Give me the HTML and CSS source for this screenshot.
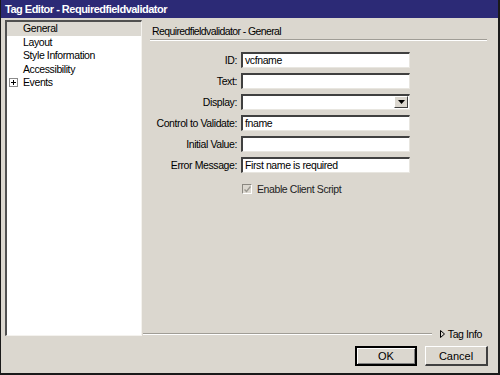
FILE: index.html
```html
<!DOCTYPE html>
<html lang="en">
<head>
    <meta charset="UTF-8">
    <title>Tag Editor - Requiredfieldvalidator</title>
    <link rel="stylesheet" href="styles.css">
</head>
<body>
    <div class="window">
        <div class="titlebar">Tag Editor - Requiredfieldvalidator</div>
        <div class="main">
            <ul class="sidebar">
                <li class="selected">General</li>
                <li>Layout</li>
                <li>Style Information</li>
                <li>Accessibility</li>
                <li><span class="plus"></span>Events</li>
            </ul>
            <div class="panel">
                <div class="panel-header">Requiredfieldvalidator - General</div>
                <div class="form">
                    <label>ID:</label>
                    <div class="field">vcfname</div>
                    <label>Text:</label>
                    <div class="field"></div>
                    <label>Display:</label>
                    <div class="field select"><span class="drop"><svg width="7" height="4" viewBox="0 0 7 4"><path d="M0 0h7L3.5 4z" fill="#000"/></svg></span></div>
                    <label>Control to Validate:</label>
                    <div class="field">fname</div>
                    <label>Initial Value:</label>
                    <div class="field"></div>
                    <label>Error Message:</label>
                    <div class="field">First name is required</div>
                </div>
                <div class="check-row">
                    <span class="checkbox"><svg width="7" height="7" viewBox="0 0 7 7"><path d="M0.5 3.5l2 2 4-5" stroke="#9a9790" stroke-width="1.4" fill="none"/></svg></span>
                    <span>Enable Client Script</span>
                </div>
                <div class="spacer"></div>
                <div class="info-row">
                    <div class="groove"></div>
                    <svg class="tri" width="5" height="8" viewBox="0 0 5 8"><path d="M0.5 0.5L4.5 4L0.5 7.5z" fill="none" stroke="#000" stroke-width="1"/></svg>
                    <span>Tag Info</span>
                </div>
            </div>
        </div>
        <div class="footer">
            <button class="btn default">OK</button>
            <button class="btn">Cancel</button>
        </div>
    </div>
</body>
</html>
```

FILE: styles.css
```css
body {
    margin: 0;
    font-family: "Liberation Sans Narrow", "Liberation Sans", Arial, sans-serif;
    font-size: 10.5px;
    letter-spacing: -0.4px;
    color: #000;
}
.window {
    width: 500px;
    height: 375px;
    box-sizing: border-box;
    background: #dbd7cf;
    border-left: 1px solid #1a1a1a;
    border-right: 2px solid #1a1a1a;
    border-bottom: 2px solid #1a1a1a;
    display: flex;
    flex-direction: column;
}
.titlebar {
    height: 18px;
    line-height: 18px;
    background: #2c2a76;
    color: #fff;
    font-family: "Liberation Sans", Arial, sans-serif;
    font-weight: bold;
    font-size: 11px;
    letter-spacing: -0.5px;
    padding-left: 4px;
}
.main {
    height: 324px;
    display: flex;
}
.sidebar {
    list-style: none;
    margin: 2px 0 6px 4px;
    padding: 0;
    width: 137px;
    box-sizing: border-box;
    background: #fff;
    border-top: 2px solid #505050;
    border-left: 2px solid #505050;
    border-right: 1px solid #f4f2ee;
    border-bottom: 1px solid #f4f2ee;
}
.sidebar li {
    height: 13.5px;
    line-height: 12px;
    padding-left: 16px;
    position: relative;
}
.sidebar li.selected {
    background: #dcd9d2;
}
.plus {
    position: absolute;
    left: 2px;
    top: 2px;
    width: 7px;
    height: 7px;
    border: 1px solid #8a8a8a;
    background:
        linear-gradient(#000, #000) center / 5px 1px no-repeat,
        linear-gradient(#000, #000) center / 1px 5px no-repeat,
        #fff;
}
.panel {
    flex: 1;
    margin-left: 1px;
    display: flex;
    flex-direction: column;
}
.panel-header {
    margin: 0 11px 0 7px;
    padding: 7px 0 1px 2px;
    line-height: 13px;
    letter-spacing: -0.6px;
    border-bottom: 1px solid #a09d96;
    box-shadow: 0 1px 0 #fff;
}
.form {
    margin-top: 12px;
    display: grid;
    grid-template-columns: 94px 169px;
    column-gap: 4px;
    row-gap: 5px;
    grid-auto-rows: 16px;
}
.form label {
    text-align: right;
    line-height: 16px;
}
.field {
    box-sizing: border-box;
    background: #fff;
    border-top: 2px solid #404040;
    border-left: 2px solid #404040;
    border-right: 1px solid #e8e6e0;
    border-bottom: 1px solid #e8e6e0;
    padding-left: 2px;
    line-height: 13px;
    position: relative;
}
.select .drop {
    position: absolute;
    right: 1px;
    top: 0;
    width: 14px;
    height: 12px;
    box-sizing: border-box;
    background: #dbd7cf;
    border-top: 1px solid #fff;
    border-left: 1px solid #fff;
    border-right: 1px solid #404040;
    border-bottom: 1px solid #404040;
    display: flex;
    align-items: center;
    justify-content: center;
}
.check-row {
    margin-top: 10px;
    padding-left: 99px;
    display: flex;
    align-items: center;
    gap: 5px;
    color: #222;
}
.checkbox {
    width: 10px;
    height: 10px;
    box-sizing: border-box;
    border-top: 1px solid #8a8780;
    border-left: 1px solid #8a8780;
    border-right: 1px solid #fff;
    border-bottom: 1px solid #fff;
    background: #dbd7cf;
    display: flex;
    align-items: center;
    justify-content: center;
}
.spacer {
    flex: 1;
}
.info-row {
    height: 9px;
    margin-bottom: 4px;
    padding-right: 16px;
    display: flex;
    align-items: center;
}
.groove {
    flex: 1;
    height: 1px;
    background: #a09d96;
    box-shadow: 0 1px 0 #fff;
    margin-right: 8px;
}
.tri {
    margin-right: 3px;
}
.footer {
    height: 31px;
    box-sizing: border-box;
    padding: 4px 10px 0 0;
    display: flex;
    justify-content: flex-end;
    gap: 8px;
}
.btn {
    width: 63px;
    height: 20px;
    font-family: "Liberation Sans Narrow", "Liberation Sans", Arial, sans-serif;
    font-size: 11px;
    background: #dbd7cf;
    border-top: 1px solid #fff;
    border-left: 1px solid #fff;
    border-right: 2px solid #404040;
    border-bottom: 2px solid #404040;
    padding: 0;
}
.btn.default {
    width: 62px;
    border: 2px solid #000;
    box-shadow: inset 1px 1px 0 #fff, inset -1px -1px 0 #808080;
}
```
